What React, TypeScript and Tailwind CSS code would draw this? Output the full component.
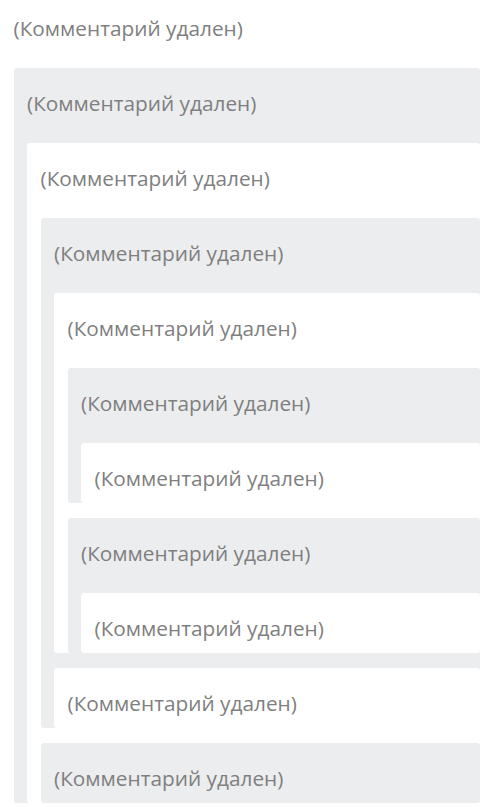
type Node = { children?: Node[] }

const tree: Node = {
  children: [
    {
      children: [
        {
          children: [
            {
              children: [
                {
                  children: [{ children: [{}] }, { children: [{}] }],
                },
                {},
              ],
            },
            {},
          ],
        },
      ],
    },
  ],
}

function Comment({ node, depth }: { node: Node; depth: number }) {
  const bg = depth % 2 === 1 ? 'bg-[#ecedef]' : 'bg-white'
  return (
    <div className={`pl-[13.5px] rounded-[3px] ${bg}`}>
      <div className={`flex items-center ${depth === 0 ? 'h-[53px] pt-[3px]' : 'h-[60px] pt-[10px]'}`}>
        <span className="text-[20.8px] leading-[24px] text-[#7f7f7f] font-['Open_Sans',sans-serif]">
          (Комментарий удален)
        </span>
      </div>
      {node.children && (
        <div className="mt-[15px] flex flex-col gap-[15px]">
          {node.children.map((c, i) => (
            <Comment key={i} node={c} depth={depth + 1} />
          ))}
        </div>
      )}
    </div>
  )
}

export default function App() {
  return (
    <div className="w-[480px] h-[807px] overflow-hidden bg-white">
      <Comment node={tree} depth={0} />
    </div>
  )
}
